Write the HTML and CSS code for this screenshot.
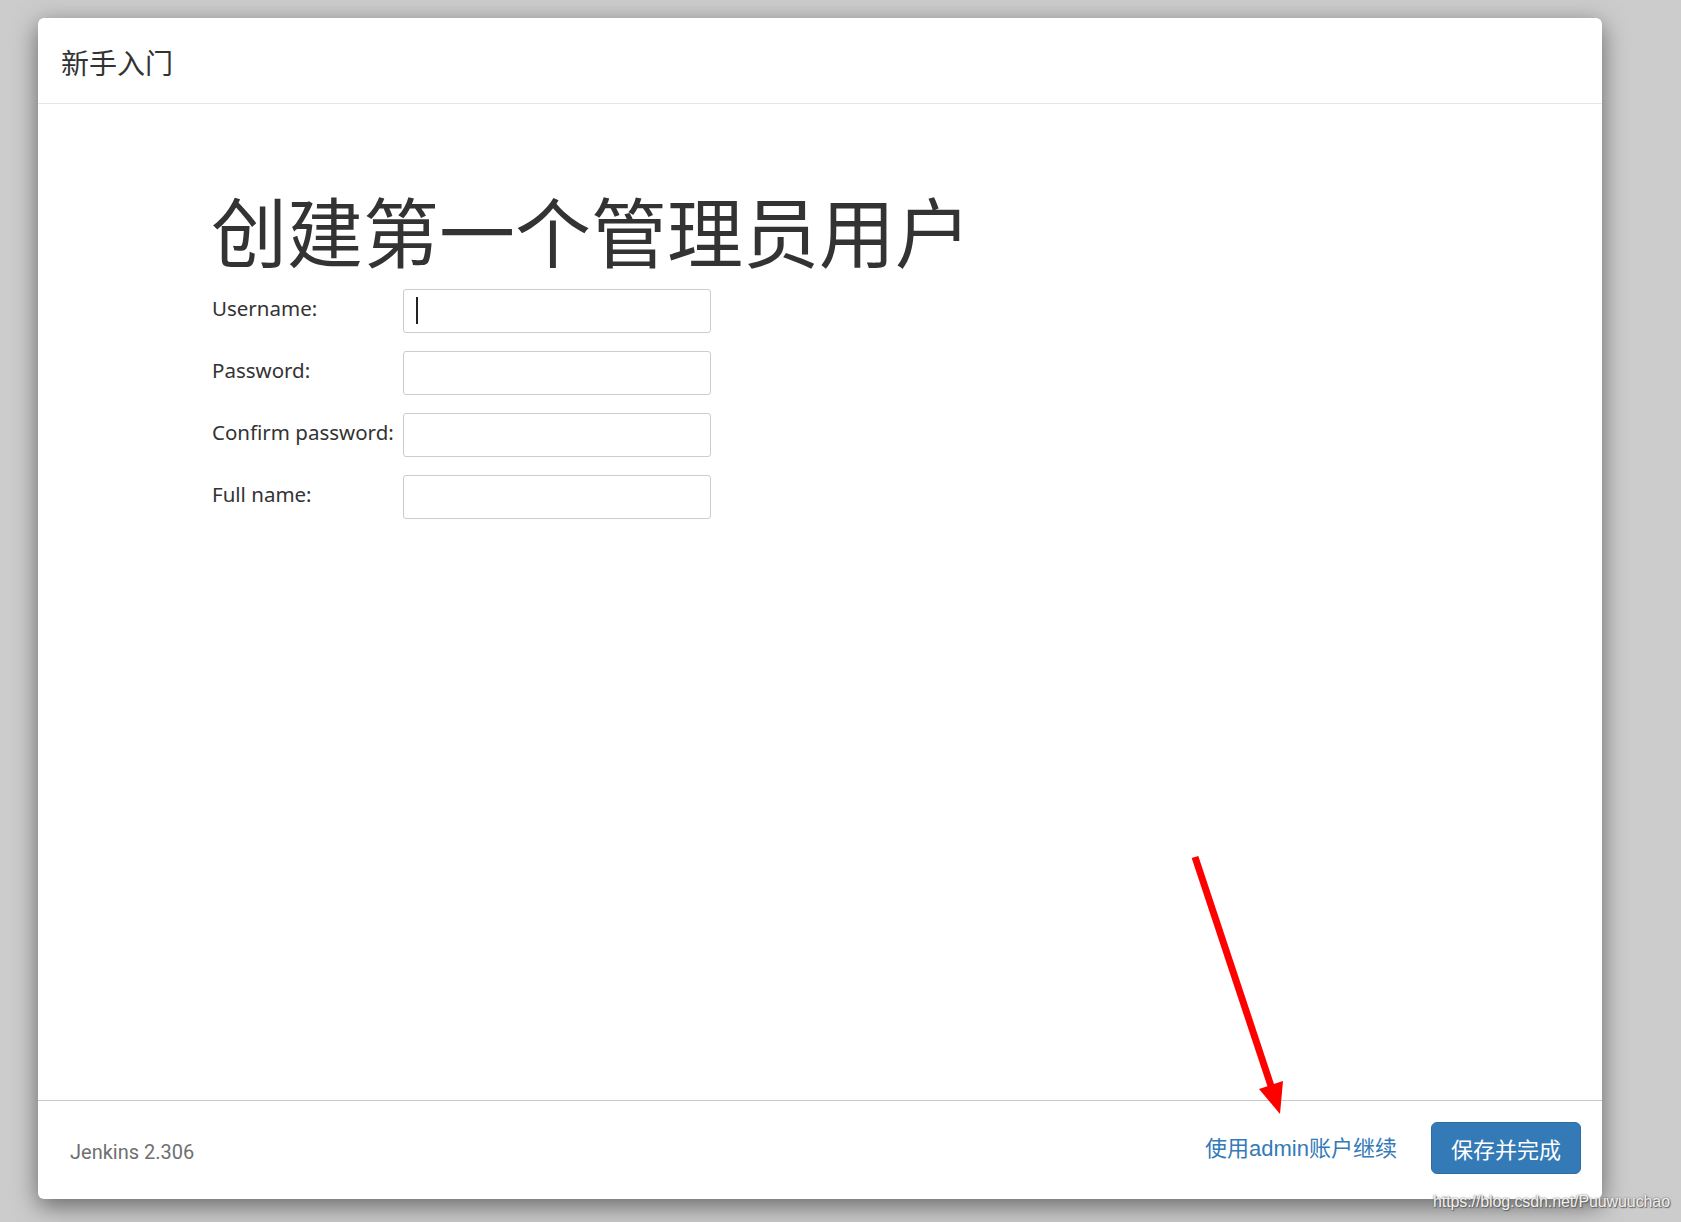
FILE: index.html
```html
<!DOCTYPE html>
<html lang="zh-CN">
<head>
<meta charset="utf-8">
<title>新手入门</title>
<link rel="stylesheet" href="styles.css">
</head>
<body>
<div class="modal">
  <div class="modal-header">
    <h4 class="modal-title">新手入门</h4>
  </div>
  <div class="modal-body">
    <h1 class="page-title">创建第一个管理员用户</h1>
    <form class="user-form">
      <label class="field-label" for="username">Username:</label>
      <div class="field"><input class="field-input" id="username" type="text"><span class="caret"></span></div>
      <label class="field-label" for="password1">Password:</label>
      <div class="field"><input class="field-input" id="password1" type="password"></div>
      <label class="field-label" for="password2">Confirm password:</label>
      <div class="field"><input class="field-input" id="password2" type="password"></div>
      <label class="field-label" for="fullname">Full name:</label>
      <div class="field"><input class="field-input" id="fullname" type="text"></div>
    </form>
  </div>
  <div class="modal-footer">
    <div class="version">Jenkins 2.306</div>
    <div class="actions">
      <a class="skip-link" href="#">使用admin账户继续</a>
      <button class="btn-primary" type="button">保存并完成</button>
    </div>
  </div>
</div>
<svg class="annotation" width="1681" height="1222" viewBox="0 0 1681 1222" xmlns="http://www.w3.org/2000/svg">
  <line x1="1195" y1="857" x2="1271" y2="1086" stroke="#ff0000" stroke-width="7"/>
  <polygon points="1259,1089 1283,1081 1280,1114" fill="#ff0000"/>
</svg>
<div class="watermark">https://blog.csdn.net/Puuwuuchao</div>
</body>
</html>
```

FILE: styles.css
```css
html, body {
  margin: 0;
  padding: 0;
}
body {
  background: #cccccc;
  width: 1681px;
  height: 1222px;
  overflow: hidden;
  position: relative;
  font-family: "Noto Sans", "Noto Sans CJK SC", sans-serif;
  color: #333333;
}
.modal {
  margin: 18px 0 0 38px;
  width: 1564px;
  height: 1181px;
  background: #ffffff;
  border-radius: 6px;
  box-shadow: 0 7px 24px rgba(0, 0, 0, 0.5);
  display: flex;
  flex-direction: column;
  overflow: hidden;
}
.modal-header {
  height: 86px;
  flex: none;
  box-sizing: border-box;
  border-bottom: 1px solid #e5e5e5;
  display: flex;
  align-items: center;
  padding: 4px 23px 0 23px;
}
.modal-title {
  margin: 0;
  font-family: "Noto Sans CJK SC", sans-serif;
  font-weight: 400;
  font-size: 28px;
  line-height: 1.2;
  color: #333333;
}
.modal-body {
  flex: 1;
  padding: 0 0 0 173px;
}
.page-title {
  margin: 87px 0 0 0;
  font-family: "Noto Sans CJK SC", sans-serif;
  font-weight: 400;
  font-size: 76px;
  line-height: 1;
  color: #333333;
}
.user-form {
  margin-top: 22px;
  display: grid;
  grid-template-columns: 192px 308px;
  row-gap: 18px;
  align-items: center;
}
.field-label {
  font-family: "Noto Sans", sans-serif;
  font-size: 20.5px;
  color: #333333;
  white-space: nowrap;
  padding-left: 1px;
  padding-bottom: 6px;
}
.field {
  position: relative;
  height: 44px;
}
.field-input {
  box-sizing: border-box;
  width: 308px;
  height: 44px;
  margin: 0;
  border: 1px solid #cccccc;
  border-radius: 3px;
  background: #ffffff;
  outline: none;
  padding: 0 12px;
  font-size: 20px;
}
.caret {
  position: absolute;
  left: 13px;
  top: 8px;
  width: 2px;
  height: 27px;
  background: #222222;
}
.modal-footer {
  height: 98px;
  flex: none;
  border-top: 1px solid #c8c8c8;
  display: flex;
  align-items: center;
  justify-content: space-between;
  padding: 0 21px 0 32px;
}
.version {
  font-family: "Roboto", "Liberation Sans", sans-serif;
  font-size: 20px;
  color: #6f6f6f;
  padding-top: 3px;
}
.actions {
  display: flex;
  align-items: center;
  gap: 34px;
  padding-bottom: 4px;
}
.skip-link {
  font-family: "Liberation Sans", "Noto Sans CJK SC", sans-serif;
  font-size: 22px;
  color: #337ab7;
  text-decoration: none;
  padding-bottom: 4px;
}
.btn-primary {
  height: 52px;
  padding: 0 19px;
  border: 1px solid #2e6da4;
  border-radius: 6px;
  background: #337ab7;
  color: #ffffff;
  font-family: "Noto Sans CJK SC", sans-serif;
  font-size: 22px;
  line-height: 1;
  cursor: pointer;
}
.annotation {
  position: absolute;
  left: 0;
  top: 0;
  pointer-events: none;
}
.watermark {
  position: absolute;
  left: 1433px;
  top: 1193px;
  font-family: "Liberation Sans", sans-serif;
  font-size: 16px;
  letter-spacing: -0.1px;
  color: #f2f2f2;
  text-shadow: 0 0 2px #555555, 1px 1px 1px #666666;
  white-space: nowrap;
}
```
